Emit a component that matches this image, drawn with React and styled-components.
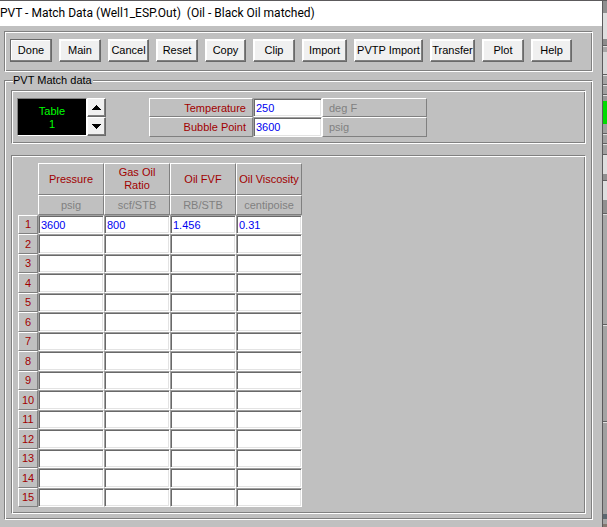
import React, { useState } from "react";

import styled, { createGlobalStyle } from "styled-components";

const colors = {
  Face: "#c0c0c0",
  Button: "#f0f0f0",
  White: "#ffffff",
  Grey: "#808080",
  DarkGrey: "#696969",
  Label: "#a00000",
  Value: "#0000f0",
  Led: "#00ff00",
};

const buttons = [
  { label: "Done", width: 42, main: true },
  { label: "Main", width: 42 },
  { label: "Cancel", width: 41 },
  { label: "Reset", width: 42 },
  { label: "Copy", width: 41 },
  { label: "Clip", width: 42 },
  { label: "Import", width: 45 },
  { label: "PVTP Import", width: 69 },
  { label: "Transfer", width: 45 },
  { label: "Plot", width: 42 },
  { label: "Help", width: 41 },
];

const columns = [
  { title: "Pressure", unit: "psig" },
  { title: "Gas Oil Ratio", unit: "scf/STB" },
  { title: "Oil FVF", unit: "RB/STB" },
  { title: "Oil Viscosity", unit: "centipoise" },
];

const firstRow = ["3600", "800", "1.456", "0.31"];
const emptyRow = ["", "", "", ""];

// slices of the main window that show to the right of the dialog
const slices = [
  { height: 12, color: "#909090" },
  { height: 26, color: "#dedede" },
  { height: 6, color: "#8c8c8c" },
  { height: 7, color: "#a8a8a8", line: true },
  { height: 22, color: "#d8d8d8" },
  { height: 10, color: "#a4a4a4", line: true },
  { height: 10, color: "#a0a0a0", line: true },
  { height: 7, color: "#989898", line: true },
  { height: 23, color: "#00dc00" },
  { height: 9, color: "#a0a0a0" },
  { height: 10, color: "#a0a0a0", line: true },
  { height: 11, color: "#a0a0a0", line: true },
  { height: 20, color: "#dedede", line: true },
  { height: 6, color: "#909090" },
  { height: 20, color: "#dedede", line: true },
  { height: 13, color: "#909090" },
  { height: 111, color: "#a8a8a8", line: true },
  { height: 97, color: "#a4a4a4", line: true },
  { height: 93, color: "#a0a0a0", line: true },
  { height: 5, color: "#5c6870" },
  { height: 5, color: "#a4a4a4" },
  { height: 3, color: "#847870" },
];

export default function App() {
  const [table, setTable] = useState(1);
  const [rows, setRows] = useState(
    Array.from({ length: 15 }, (_, i) => (i === 0 ? firstRow : emptyRow))
  );

  const setCell = (r, c, value) =>
    setRows(
      rows.map((row, i) =>
        i === r ? row.map((cell, j) => (j === c ? value : cell)) : row
      )
    );

  return (
    <>
      <GlobalStyle />
      <Screen>
        <Dialog>
          <TitleBar>
            PVT - Match Data (Well1_ESP.Out)&nbsp; (Oil - Black Oil matched)
          </TitleBar>
          <Body>
            <Toolbar>
              {buttons.map((b) => (
                <ToolButton key={b.label} $width={b.width} $main={b.main}>
                  {b.label}
                </ToolButton>
              ))}
            </Toolbar>
            <Group>
              <legend>PVT Match data</legend>
              <TopPanel>
                <Picker>
                  <Led>
                    Table
                    <br />
                    {table}
                  </Led>
                  <Spinner>
                    <SpinButton
                      aria-label="Next table"
                      onClick={() => setTable(table + 1)}
                    >
                      <svg width="9" height="5" viewBox="0 0 9 5">
                        <path d="M0 5V4H1V3H2V2H3V1H4V0H5V1H6V2H7V3H8V4H9V5Z" />
                      </svg>
                    </SpinButton>
                    <SpinButton
                      aria-label="Previous table"
                      onClick={() => setTable(Math.max(1, table - 1))}
                    >
                      <svg width="9" height="5" viewBox="0 0 9 5">
                        <path d="M0 0V1H1V2H2V3H3V4H4V5H5V4H6V3H7V2H8V1H9V0Z" />
                      </svg>
                    </SpinButton>
                  </Spinner>
                </Picker>
                <Fields>
                  <FieldLabel htmlFor="temperature">Temperature</FieldLabel>
                  <Cell id="temperature" defaultValue="250" />
                  <FieldUnit>deg F</FieldUnit>
                  <FieldLabel htmlFor="bubble">Bubble Point</FieldLabel>
                  <Cell id="bubble" defaultValue="3600" />
                  <FieldUnit>psig</FieldUnit>
                </Fields>
              </TopPanel>
              <GridPanel>
                <Grid>
                  <thead>
                    <tr>
                      <Corner rowSpan={2} />
                      {columns.map((c) => (
                        <ColumnTitle key={c.title} scope="col">
                          {c.title}
                        </ColumnTitle>
                      ))}
                    </tr>
                    <tr>
                      {columns.map((c) => (
                        <ColumnUnit key={c.title}>{c.unit}</ColumnUnit>
                      ))}
                    </tr>
                  </thead>
                  <tbody>
                    {rows.map((row, r) => (
                      <Row key={r}>
                        <RowNumber scope="row">{r + 1}</RowNumber>
                        {row.map((value, c) => (
                          <td key={c}>
                            <Cell
                              aria-label={`${columns[c].title} ${r + 1}`}
                              value={value}
                              onChange={(e) => setCell(r, c, e.target.value)}
                            />
                          </td>
                        ))}
                      </Row>
                    ))}
                  </tbody>
                </Grid>
              </GridPanel>
            </Group>
          </Body>
        </Dialog>
        <Behind>
          {slices.map((s, i) => (
            <Slice key={i} $height={s.height} $color={s.color} $line={s.line} />
          ))}
        </Behind>
      </Screen>
    </>
  );
}

const GlobalStyle = createGlobalStyle`
  * {
    box-sizing: border-box;
  }
  body {
    margin: 0;
    background-color: ${colors.Face};
    font-family: "Liberation Sans", Arial, sans-serif;
    font-size: 11px;
    line-height: 13px;
  }
  button,
  input {
    font: inherit;
    margin: 0;
  }
`;

const Screen = styled.div`
  display: grid;
  grid-template-columns: minmax(0, 1fr) 4px;
  min-height: 100vh;
  border-top: 1px solid #5c5a5c;
`;

const Dialog = styled.main`
  background-color: ${colors.Face};
  border-right: 1px solid #5c5a5c;
`;

const TitleBar = styled.header`
  height: 25px;
  background-color: ${colors.White};
  font-family: Roboto, "Segoe UI", sans-serif;
  font-size: 12px;
  line-height: 24px;
  white-space: nowrap;
  overflow: hidden;
`;

const Body = styled.div`
  padding: 5px 9px 7px 4px;
`;

const Toolbar = styled.div`
  display: flex;
  gap: 7px;
  padding: 7px 5px 9px;
  border: 1px solid;
  border-color: ${colors.Grey} ${colors.White} ${colors.White} ${colors.Grey};
  box-shadow: inset 1px 1px ${colors.White}, inset -1px -1px ${colors.Grey};
`;

const ToolButton = styled.button`
  flex: 0 0 ${(p) => p.$width}px;
  height: 23px;
  padding: 0 0 1px;
  background-color: ${colors.Button};
  border: 1px solid;
  border-color: ${(p) =>
    p.$main
      ? colors.DarkGrey
      : `${colors.White} ${colors.DarkGrey} ${colors.DarkGrey} ${colors.White}`};
  box-shadow: inset -1px -1px ${colors.Grey}, inset 1px 1px ${colors.White};
  color: #000000;
  white-space: nowrap;
`;

const Group = styled.fieldset`
  min-width: 0;
  margin: 2px 0 0;
  padding: 3px 6px 5px;
  border: 1px solid;
  border-color: ${colors.Grey} ${colors.White} ${colors.White} ${colors.Grey};
  box-shadow: inset 1px 1px ${colors.White}, inset -1px -1px ${colors.Grey};

  legend {
    margin-left: 2px;
    padding: 0 1px 0 0;
    background-color: ${colors.Face};
  }
`;

const Panel = styled.div`
  border: 1px solid;
  border-color: ${colors.Grey} ${colors.White} ${colors.White} ${colors.Grey};
  box-shadow: inset 1px 1px ${colors.White}, inset -1px -1px ${colors.Grey};
`;

const TopPanel = styled(Panel)`
  display: flex;
  gap: 43px;
  padding: 7px 5px 6px;
`;

const Picker = styled.div`
  display: flex;
`;

const Led = styled.output`
  width: 70px;
  height: 38px;
  padding-top: 6px;
  background-color: #000000;
  border: 1px solid;
  border-color: ${colors.Grey} ${colors.White} ${colors.White} ${colors.Grey};
  color: ${colors.Led};
  text-align: center;
`;

const Spinner = styled.div`
  display: flex;
  flex-direction: column;
`;

const SpinButton = styled.button`
  display: flex;
  align-items: center;
  justify-content: center;
  width: 19px;
  height: 19px;
  padding: 0;
  background-color: ${colors.Button};
  border: 1px solid;
  border-color: ${colors.White} ${colors.DarkGrey} ${colors.DarkGrey}
    ${colors.White};
  box-shadow: inset -1px -1px ${colors.Grey};
`;

const Fields = styled.div`
  display: grid;
  grid-template-columns: 104px 69px 105px;
  grid-template-rows: 19px 20px;
`;

const FieldLabel = styled.label`
  padding: 3px 6px 0 0;
  border: 1px solid;
  border-color: ${colors.White} ${colors.Grey} ${colors.Grey} ${colors.White};
  color: ${colors.Label};
  text-align: right;
`;

const FieldUnit = styled.span`
  padding: 3px 0 0 6px;
  border: 1px solid;
  border-color: ${colors.White} ${colors.Grey} ${colors.Grey} ${colors.White};
  color: ${colors.Grey};
`;

const Cell = styled.input`
  display: block;
  width: 100%;
  height: 100%;
  padding: 0 2px;
  background-color: ${colors.White};
  border: 1px solid;
  border-color: #a0a0a0 ${colors.White} ${colors.White} #a0a0a0;
  border-radius: 0;
  box-shadow: inset 1px 1px ${colors.DarkGrey}, inset -1px -1px #e3e3e3;
  color: ${colors.Value};
  outline: none;
`;

const GridPanel = styled(Panel)`
  margin-top: 11px;
  padding: 7px 6px 6px;
`;

const Grid = styled.table`
  width: 284px;
  table-layout: fixed;
  border-spacing: 0;

  td {
    padding: 0;
  }
`;

const Corner = styled.td`
  width: 20px;
`;

const HeadCell = styled.th`
  padding: 0;
  border: 1px solid;
  border-color: ${colors.White} ${colors.Grey} ${colors.Grey} ${colors.White};
  color: ${colors.Label};
  font-weight: normal;
`;

const ColumnTitle = styled(HeadCell)`
  height: 32px;
`;

const ColumnUnit = styled(HeadCell)`
  height: 20px;
  color: ${colors.Grey};
`;

const RowNumber = styled(HeadCell)``;

const Row = styled.tr`
  height: 19px;

  input {
    height: 19px;
  }

  &:nth-child(even),
  &:nth-child(even) input {
    height: 20px;
  }
`;

const Behind = styled.div`
  overflow: hidden;
`;

const Slice = styled.div`
  height: ${(p) => p.$height}px;
  background-color: ${(p) => p.$color};
  border-top: ${(p) => (p.$line ? "1px solid #606060" : "none")};
  box-shadow: ${(p) => (p.$line ? "inset 0 1px #e0e0e0" : "none")};
`;
